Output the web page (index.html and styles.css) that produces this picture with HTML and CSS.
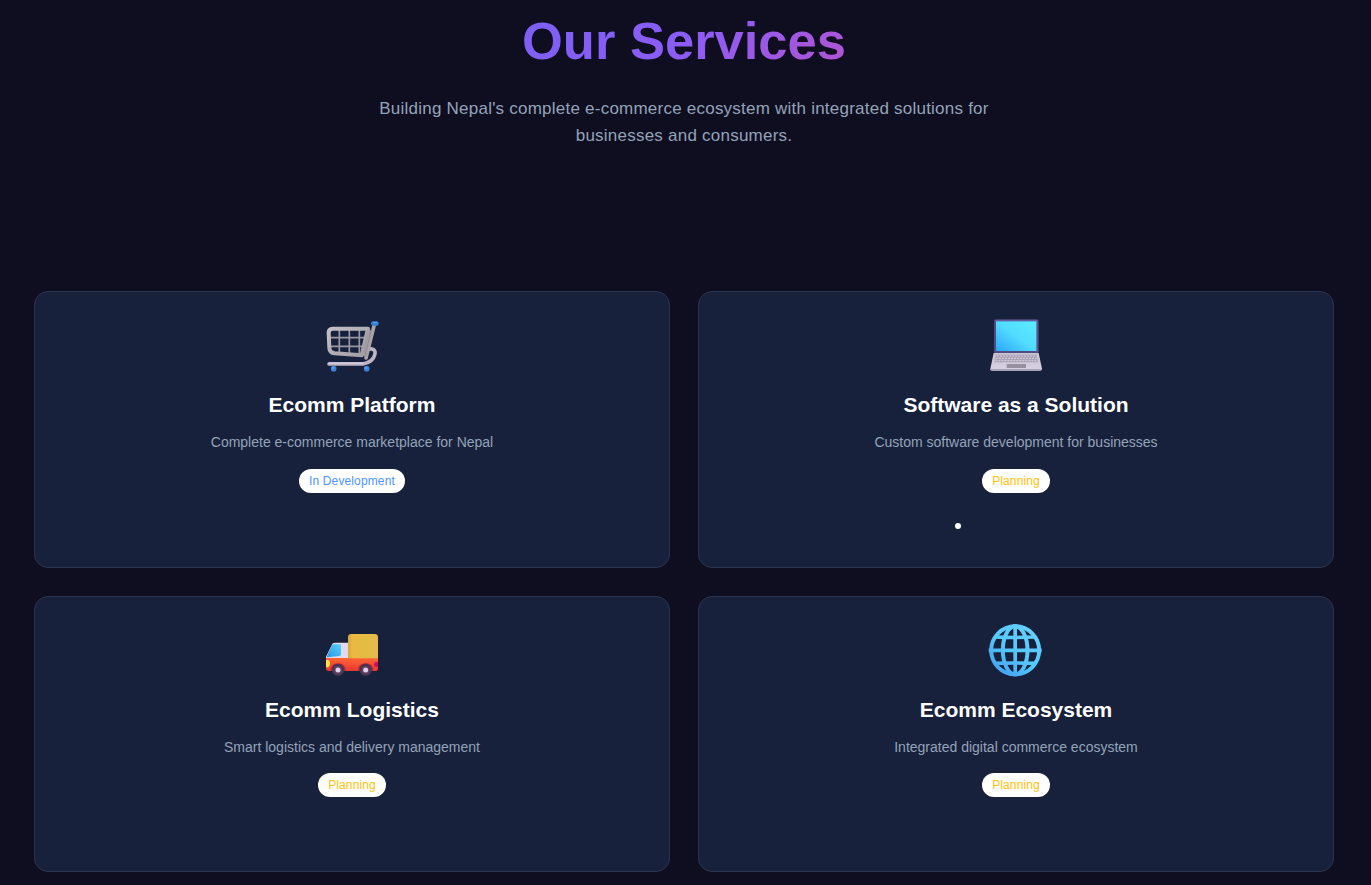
FILE: index.html
```html
<!DOCTYPE html>
<html lang="en">
<head>
<meta charset="utf-8">
<title>Our Services</title>
<link rel="stylesheet" href="styles.css">
</head>
<body>
<main class="services">
  <header class="intro">
    <h1 class="title">Our Services</h1>
    <p class="lead">Building Nepal's complete e-commerce ecosystem with integrated solutions for<br>businesses and consumers.</p>
  </header>
  <section class="grid">
    <article class="card">
      <svg class="icon" viewBox="0 0 210 198" fill="none">
        <defs>
          <linearGradient id="metal" x1="0" y1="0" x2="1" y2="1"><stop stop-color="#c4bfc4"/><stop offset="1" stop-color="#a29da5"/></linearGradient>
        </defs>
        <path d="M67 52V126M97 52V129M127 52V131M40 77H146M40 103H141" stroke="#9a98a1" stroke-width="5"/>
        <path d="M155 112C170 107 177 117 173 129C169 145 154 153 138 156H36" stroke="#bdb4c6" stroke-width="11" stroke-linecap="round"/>
        <path d="M36 153H138" stroke="#d9d1e2" stroke-width="4" stroke-linecap="round"/>
        <path d="M47 50H153L134 130L53 124Q38 122 37 108L35 62Q35 51 47 50Z" stroke="url(#metal)" stroke-width="12" stroke-linejoin="round"/>
        <path d="M157 54L138 132" stroke="#a29da3" stroke-width="13"/>
        <path d="M172 38L147 138" stroke="#aaa4a8" stroke-width="11" stroke-linecap="round"/>
        <path d="M163 54L144 133" stroke="#827d84" stroke-width="2"/>
        <rect x="162" y="28" width="23" height="13" rx="6" fill="#347fd2"/>
        <rect x="168" y="30" width="14" height="4" rx="2" fill="#4ba0eb"/>
        <circle cx="50" cy="170" r="8.5" fill="#3b83d8"/><circle cx="149" cy="170" r="8.5" fill="#3b83d8"/>
        <circle cx="48" cy="168" r="4" fill="#5299e7"/><circle cx="147" cy="168" r="4" fill="#5299e7"/>
      </svg>
      <h2 class="name">Ecomm Platform</h2>
      <p class="desc">Complete e-commerce marketplace for Nepal</p>
      <span class="badge badge-dev">In Development</span>
    </article>
    <article class="card">
      <svg class="icon" viewBox="0 0 210 198" fill="none">
        <defs>
          <linearGradient id="screen" x1="0" y1="1" x2="1" y2="0"><stop stop-color="#2ba5ff"/><stop offset=".5" stop-color="#52dcff"/><stop offset="1" stop-color="#5aedff"/></linearGradient>
          <linearGradient id="base" x1="0" y1="0" x2="0" y2="1"><stop stop-color="#c8c1d0"/><stop offset="1" stop-color="#d9d2e2"/></linearGradient>
        </defs>
        <rect x="39" y="22" width="134" height="103" rx="6" fill="#504b83"/>
        <path d="M42 26H168V120" stroke="#6660ad" stroke-width="3"/>
        <rect x="45" y="28" width="121" height="89" fill="url(#screen)"/>
        <path d="M38 123H173L183 170Q183 176 177 176H33Q27 176 28 170Z" fill="url(#base)"/>
        <path d="M29 173H181" stroke="#aaa1b9" stroke-width="4"/>
        <path d="M45 128H167L171 151H40Z" fill="#aaa3b5"/>
        <path d="M48 132H166M45 139H167M43 146H168" stroke="#cfc8d8" stroke-width="3.500" stroke-dasharray="6 3"/>
        <rect x="77" y="156" width="58" height="12" fill="#9690a0"/>
      </svg>
      <h2 class="name">Software as a Solution</h2>
      <p class="desc">Custom software development for businesses</p>
      <span class="badge">Planning</span>
      <i class="dot"></i>
    </article>
    <article class="card">
      <svg class="icon" viewBox="0 0 210 198" fill="none">
        <defs>
          <linearGradient id="body" x1="0" y1="0" x2="0" y2="1"><stop stop-color="#ff6538"/><stop offset="1" stop-color="#e93832"/></linearGradient>
          <linearGradient id="box" x1="0" y1="0" x2="1" y2="0"><stop stop-color="#d5a83d"/><stop offset=".15" stop-color="#ebb943"/><stop offset=".6" stop-color="#e2bd42"/><stop offset="1" stop-color="#e7b94e"/></linearGradient>
          <linearGradient id="glass" x1="0" y1="1" x2="1" y2="0"><stop stop-color="#2c97e8"/><stop offset="1" stop-color="#55d2f8"/></linearGradient>
        </defs>
        <path d="M47 79Q50 77 56 77H98V130H27V119Z" fill="#e2d9ec"/>
        <path d="M47 82H69Q72 82 72 86V112Q72 117 67 117L30 121V118L43 88Q45 83 47 82Z" fill="url(#glass)"/>
        <path d="M27 123H183V155Q183 162 176 162H35Q27 162 27 154Z" fill="url(#body)"/>
        <path d="M93 124V61Q93 51 103 51H173Q183 51 183 61V124Z" fill="url(#box)"/>
        <path d="M27 129H33Q39 130 39 139Q39 149 33 151H27Z" fill="#ffe244"/>
        <path d="M183 135H177Q171 136 171 143Q171 150 177 150H183Z" fill="#d20e55"/>
        <path d="M40 162Q40 139 63 139Q86 139 86 162M123 162Q123 139 146 139Q169 139 169 162" fill="#b52937"/>
        <circle cx="63" cy="159" r="18.5" fill="#483350"/><circle cx="146" cy="159" r="18.5" fill="#483350"/>
        <circle cx="63" cy="159" r="12" fill="#60405f"/><circle cx="146" cy="159" r="12" fill="#60405f"/>
        <circle cx="63" cy="159" r="7.5" fill="#ddd1ec"/><circle cx="146" cy="159" r="7.5" fill="#ddd1ec"/>
      </svg>
      <h2 class="name">Ecomm Logistics</h2>
      <p class="desc">Smart logistics and delivery management</p>
      <span class="badge">Planning</span>
    </article>
    <article class="card">
      <svg class="icon" viewBox="0 0 210 198" fill="none">
        <defs>
          <linearGradient id="globe" gradientUnits="userSpaceOnUse" x1="40" y1="175" x2="150" y2="30"><stop stop-color="#419cf0"/><stop offset=".5" stop-color="#55c8fb"/><stop offset="1" stop-color="#65cfff"/></linearGradient>
        </defs>
        <g stroke="url(#globe)" stroke-width="12">
          <circle cx="102.500" cy="100" r="72"/>
          <ellipse cx="102.500" cy="100" rx="37" ry="72"/>
          <path d="M102 27H103V173H102ZM28 99.500H177V100.500H28Z" stroke-width="10"/>
          <path d="M42 60Q102 63 163 60M42 139Q102 137 163 139" stroke-width="11"/>
        </g>
      </svg>
      <h2 class="name">Ecomm Ecosystem</h2>
      <p class="desc">Integrated digital commerce ecosystem</p>
      <span class="badge">Planning</span>
    </article>
  </section>
</main>
</body>
</html>
```
FILE: styles.css
```css
* { box-sizing: border-box; }
body {
  margin: 0;
  background: #0e0e20;
  font-family: "Liberation Sans", Arial, sans-serif;
  color: #fff;
  overflow: hidden;
}
.services { width: 1368px; padding: 9px 34px 0; }
.intro { height: 282px; text-align: center; }
.title {
  width: 896px;
  margin: 0 auto;
  font-size: 52.5px;
  line-height: 63px;
  background: linear-gradient(135deg, #6366f1 0%, #8b5cf6 50%, #ec4899 100%);
  -webkit-background-clip: text;
  background-clip: text;
  color: transparent;
}
.lead {
  margin: 23px 0 0;
  font-size: 17px;
  line-height: 27px;
  letter-spacing: 0.23px;
  color: #94a3b8;
}
.grid {
  display: grid;
  grid-template-columns: 1fr 1fr;
  grid-auto-rows: 276.5px;
  gap: 28px;
}
.card {
  position: relative;
  display: flex;
  flex-direction: column;
  align-items: center;
  padding-top: 20px;
  border: 1px solid #2b3550;
  border-radius: 14px;
  background: #17213c;
}
.icon { width: 70px; height: 66px; flex: none; }
.name { margin: 14px 0 0; font-size: 21px; line-height: 26px; }
.desc { margin: 13px 0 0; font-size: 14px; line-height: 22px; color: #94a3b8; }
.badge {
  margin-top: 15.9px;
  height: 24px;
  padding: 0 10px;
  border-radius: 12px;
  background: #fff;
  color: #ffc107;
  font-size: 12px;
  line-height: 24px;
  letter-spacing: 0.13px;
}
.card:nth-child(n + 3) .badge { margin-top: 15px; }
.badge-dev { color: #4d94ff; }
.dot {
  position: absolute;
  left: 256px;
  top: 230.5px;
  width: 6px;
  height: 6px;
  border-radius: 50%;
  background: #fff;
}
```
